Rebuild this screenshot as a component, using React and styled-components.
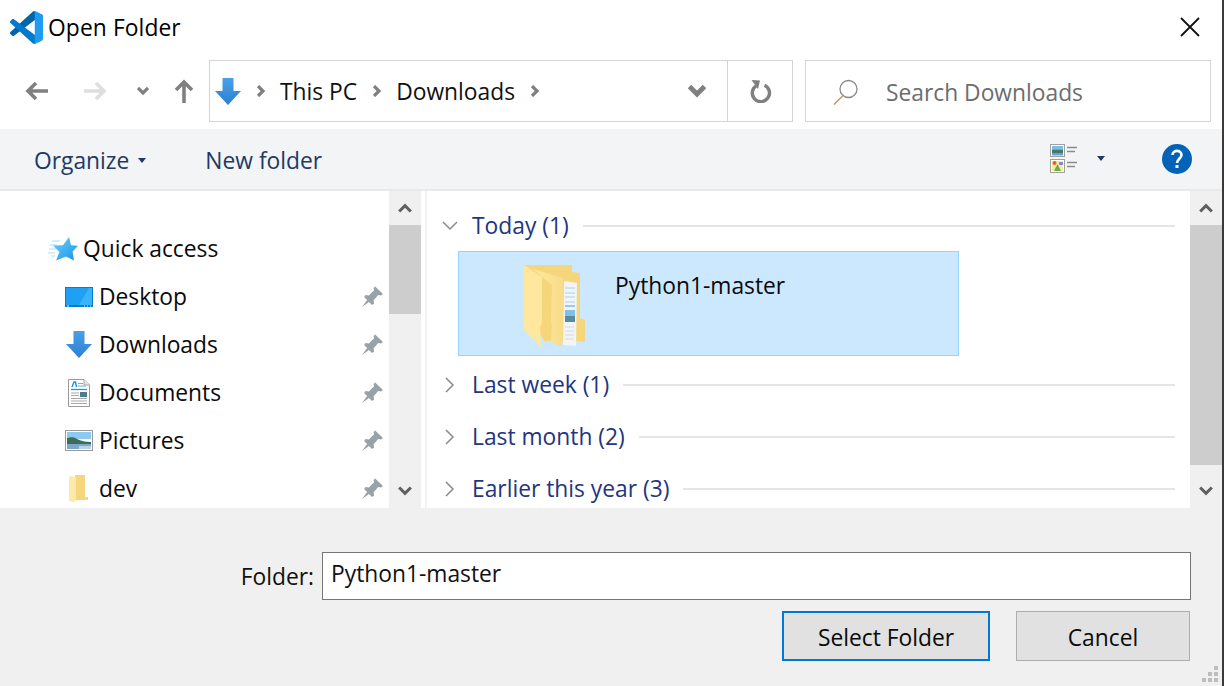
import React from 'react';
import styled, { createGlobalStyle } from 'styled-components';

const GlobalStyle = createGlobalStyle`
  html, body {
    margin: 0;
    background: #ffffff;
  }
  * {
    box-sizing: border-box;
  }
`;

const FONT = `"Open Sans", "Noto Sans", sans-serif`;

const Dialog = styled.div`
  width: 1224px;
  height: 686px;
  display: flex;
  flex-direction: column;
  overflow: hidden;
  border-right: 2px solid #3a3a3a;
  font-family: ${FONT};
  font-size: 22.8px;
  color: #000;
  background: #fff;
`;

const TitleBar = styled.div`
  height: 54px;
  display: flex;
  align-items: center;
  padding: 0 22px 0 10px;
  flex-shrink: 0;
`;

const TitleText = styled.div`
  margin-left: 5px;
  flex: 1;
  letter-spacing: 0.1px;
`;

const NavRow = styled.div`
  height: 75px;
  display: flex;
  align-items: flex-start;
  padding: 6px 11px 0 8px;
  flex-shrink: 0;
`;

const NavCell = styled.div`
  width: ${(p) => p.$w}px;
  height: 62px;
  display: flex;
  align-items: center;
  justify-content: center;
`;

const AddressBox = styled.div`
  width: 584px;
  height: 62px;
  margin-left: 3px;
  border: 1px solid #d4d4d4;
  display: flex;
  align-items: center;
  padding-left: 5px;
`;

const Crumb = styled.span`
  color: #111;
`;

const CrumbSep = styled.span`
  display: flex;
  margin: 0 13px 0 14px;
`;

const Grow = styled.div`
  flex: 1;
`;

const AddressEnd = styled.div`
  width: 65px;
  height: 100%;
  margin-left: 21px;
  border-left: 1px solid #d4d4d4;
  display: flex;
  align-items: center;
  justify-content: center;
  padding-left: 2px;
`;

const SearchBox = styled.div`
  width: 406px;
  height: 62px;
  margin-left: 12px;
  border: 1px solid #d4d4d4;
  display: flex;
  align-items: center;
  padding: 2px 0 0 27px;
  color: #6d6d6d;
  gap: 27px;
`;

const Toolbar = styled.div`
  height: 62px;
  flex-shrink: 0;
  background: #f3f4f6;
  border-bottom: 2px solid #e9e9e9;
  display: flex;
  align-items: center;
  padding: 2px 30px 0 34px;
  color: #1e3a66;
`;

const ToolButton = styled.div`
  display: flex;
  align-items: center;
  gap: 9px;
  margin-right: 59px;
`;

const HelpSlot = styled.div`
  display: flex;
  margin: -3px 0 0 38px;
`;

const ViewSlot = styled.div`
  display: flex;
  margin-top: -3px;
`;

const CaretSlot = styled.div`
  width: 46px;
  display: flex;
  justify-content: center;
  margin-top: -3px;
`;

const Main = styled.div`
  height: 317px;
  flex-shrink: 0;
  display: flex;
  overflow: hidden;
`;

const Sidebar = styled.div`
  width: 389px;
  padding-top: 34px;
  overflow: hidden;
  flex-shrink: 0;
`;

const NavItem = styled.div`
  height: 48px;
  display: flex;
  align-items: center;
  padding: 0 6px 1px ${(p) => (p.$top ? 48 : 62)}px;
  color: #0a0a0a;
`;

const ItemIcon = styled.div`
  width: ${(p) => (p.$top ? 30 : 33)}px;
  margin-right: ${(p) => (p.$top ? 5 : 4)}px;
  display: flex;
  align-items: center;
  justify-content: center;
  flex-shrink: 0;
`;

const Scrollbar = styled.div`
  width: 32px;
  flex-shrink: 0;
  background: #f0f0f0;
  display: flex;
  flex-direction: column;
`;

const ScrollArrow = styled.div`
  height: 34px;
  display: flex;
  align-items: center;
  justify-content: center;
`;

const ScrollThumb = styled.div`
  height: ${(p) => p.$h}px;
  background: #cdcdcd;
`;

const Content = styled.div`
  flex: 1;
  margin-left: 4px;
  border-left: 2px solid #f2f2f2;
  padding: 11px 15px 0 0;
  overflow: hidden;
`;

const GroupHeader = styled.div`
  height: ${(p) => p.$h}px;
  display: flex;
  align-items: center;
  padding-left: 15px;
  color: #23357f;
`;

const GroupLabel = styled.span`
  margin: -2px 14px 0 14px;
  white-space: nowrap;
`;

const GroupLine = styled.div`
  flex: 1;
  height: 2px;
  background: #e5e5e5;
`;

const FolderTile = styled.div`
  width: 501px;
  height: 105px;
  margin: 1px 0 3px 31px;
  background: #cce8ff;
  border: 1px solid #99d1ff;
  display: flex;
  align-items: flex-start;
  padding: 13px 0 0 65px;
  color: #0a0a0a;
`;

const TileName = styled.div`
  margin: 5px 0 0 29px;
`;

const Footer = styled.div`
  flex: 1;
  background: #f0f0f0;
  position: relative;
  padding: 44px 31px 0 0;
`;

const FieldRow = styled.div`
  display: flex;
  align-items: center;
  justify-content: flex-end;
`;

const FieldLabel = styled.label`
  margin-right: 8px;
  color: #111;
`;

const FieldInput = styled.div`
  width: 869px;
  height: 48px;
  background: #fff;
  border: 1px solid #767676;
  display: flex;
  align-items: center;
  padding: 0 0 6px 8px;
  color: #111;
`;

const ButtonRow = styled.div`
  display: flex;
  justify-content: flex-end;
  gap: 26px;
  margin-top: 11px;
  padding-right: 1px;
`;

const DialogButton = styled.button`
  width: ${(p) => p.$w}px;
  height: 50px;
  background: #e1e1e1;
  border: ${(p) => (p.$primary ? '2px solid #0078d7' : '1px solid #adadad')};
  font: inherit;
  color: #0a0a0a;
  padding: 2px 0 0;
`;

const Grip = styled.svg`
  position: absolute;
  right: 4px;
  bottom: 4px;
`;

const VsCodeLogo = () => (
  <svg width="33" height="33" viewBox="0 0 100 100">
    <path fill="#0065A9" d="M96.4614 10.7962L75.8569 0.875542C73.4719 -0.272773 70.6217 0.211611 68.75 2.08333L1.29858 63.5832C-0.515693 65.2373 -0.513607 68.0937 1.30308 69.7452L6.81272 74.754C8.29793 76.1042 10.5347 76.2036 12.1338 74.9905L93.3609 13.3699C96.086 11.3026 100 13.2462 100 16.6667V16.4275C100 14.0265 98.6246 11.8378 96.4614 10.7962Z" />
    <path fill="#007ACC" d="M96.4614 89.2038L75.8569 99.1245C73.4719 100.273 70.6217 99.7884 68.75 97.9167L1.29858 36.4169C-0.515693 34.7627 -0.513607 31.9063 1.30308 30.2548L6.81272 25.246C8.29793 23.8958 10.5347 23.7964 12.1338 25.0095L93.3609 86.6301C96.086 88.6974 100 86.7538 100 83.3334V83.5726C100 85.9735 98.6246 88.1622 96.4614 89.2038Z" />
    <path fill="#1F9CF0" d="M75.8578 99.1263C73.4721 100.274 70.6219 99.7885 68.75 97.9166C71.0564 100.223 75 98.5895 75 95.3278V4.67213C75 1.41039 71.0564 -0.223106 68.75 2.08329C70.6219 0.211402 73.4721 -0.273666 75.8578 0.873633L96.4587 10.7807C98.6234 11.8217 100 14.0112 100 16.4132V83.5871C100 85.9891 98.6234 88.1786 96.4586 89.2196L75.8578 99.1263Z" />
  </svg>
);

const CloseIcon = () => (
  <svg width="20" height="20" viewBox="0 0 20 20">
    <path d="M1 1L19 19M19 1L1 19" stroke="#111" strokeWidth="1.8" fill="none" />
  </svg>
);

const ArrowLeft = ({ color = '#808080' }) => (
  <svg width="24" height="20" viewBox="0 0 24 20">
    <path d="M23 10H4M11 2L3 10L11 18" stroke={color} strokeWidth="3.6" fill="none" />
  </svg>
);

const ArrowRight = ({ color = '#dedede' }) => (
  <svg width="24" height="20" viewBox="0 0 24 20">
    <path d="M1 10H20M13 2L21 10L13 18" stroke={color} strokeWidth="3.6" fill="none" />
  </svg>
);

const ArrowUp = () => (
  <svg width="20" height="24" viewBox="0 0 20 24">
    <path d="M10 24V4M2 11L10 3L18 11" stroke="#808080" strokeWidth="3.6" fill="none" />
  </svg>
);

const Chevron = ({ dir = 'down', size = 12, color = '#808080', weight = 3.2 }) => {
  const paths = {
    down: 'M1 3L6 8L11 3',
    up: 'M1 9L6 4L11 9',
    right: 'M3 1L8 6L3 11',
  };
  return (
    <svg width={size} height={size} viewBox="0 0 12 12">
      <path d={paths[dir]} stroke={color} strokeWidth={weight} fill="none" />
    </svg>
  );
};

const ThinChevron = ({ dir }) => (
  <svg width="16" height="16" viewBox="0 0 16 16">
    <path d={dir === 'down' ? 'M1 4L8 11L15 4' : 'M4 1L11 8L4 15'} stroke="#8a8a8a" strokeWidth="1.5" fill="none" />
  </svg>
);

const Caret = ({ color = '#1e3a66' }) => (
  <svg width="8" height="5" viewBox="0 0 8 5">
    <path d="M0 0H8L4 5Z" fill={color} />
  </svg>
);

const DownloadArrow = ({ width = 26, height = 27 }) => (
  <svg width={width} height={height} viewBox="0 0 26 27">
    <defs>
      <linearGradient id="dlg" x1="0" y1="0" x2="0" y2="1">
        <stop offset="0" stopColor="#4a9fe8" />
        <stop offset="1" stopColor="#2c80d3" />
      </linearGradient>
    </defs>
    <path d="M7.5 0H18.5V13H26L13 27L0 13H7.5Z" fill="url(#dlg)" />
  </svg>
);

const RefreshIcon = () => (
  <svg width="22" height="24" viewBox="0 0 22 24">
    <path d="M14.5 6.2A8.6 8.6 0 1 1 6.5 6.6" stroke="#808080" strokeWidth="3.4" fill="none" />
    <path d="M1.5 1L10 1.5L8 10Z" fill="#808080" />
  </svg>
);

const SearchIcon = () => (
  <svg width="26" height="26" viewBox="0 0 26 26">
    <circle cx="15.5" cy="10" r="8.5" stroke="#8a8a8a" strokeWidth="1.3" fill="none" />
    <path d="M10 16.5L1 25.5" stroke="#c29a6a" strokeWidth="1.6" />
  </svg>
);

const StarIcon = () => (
  <svg width="30" height="24" viewBox="0 0 30 24">
    <defs>
      <linearGradient id="starg" x1="0" y1="0" x2="1" y2="1">
        <stop offset="0" stopColor="#6fd0ff" />
        <stop offset="1" stopColor="#1793e6" />
      </linearGradient>
    </defs>
    <path d="M4 4H12M2 8H9M1 12H8M0 16H7M3 19H7" stroke="#a6e0ff" strokeWidth="1.2" />
    <path d="M21 0L23 8.2L30 8.8L24.6 14.5L26 23.5L18 19.5L8 23.5L11.5 15L5 8.5L15 8.2Z" fill="url(#starg)" />
  </svg>
);

const DesktopIcon = () => (
  <svg width="28" height="20" viewBox="0 0 28 20">
    <rect x="0" y="0" width="28" height="20" fill="#0a7ccb" />
    <rect x="1" y="1" width="26" height="17" fill="#1ea0f5" />
    <path d="M14 18L24 1H27V18Z" fill="#39b3fb" />
    <path d="M2 19H4M19 19H20M22 19H23M25 19H26" stroke="#d8f0ff" strokeWidth="1" />
  </svg>
);

const DocumentIcon = () => (
  <svg width="22" height="28" viewBox="0 0 22 28">
    <path d="M.5.5H16L21.5 6V27.5H.5Z" fill="#fff" stroke="#9a9a9a" />
    <path d="M16 .5V6H21.5" fill="#e6e6e6" stroke="#a8a8a8" />
    <path d="M4 8L6 3H7.5L8.5 8" stroke="#1d8fe0" strokeWidth="1.4" fill="none" />
    <path d="M10 4.5H15M10 7H18" stroke="#5db4ea" strokeWidth="1" />
    <path d="M3 10.5H19" stroke="#1d8fe0" strokeWidth="1.2" />
    <path d="M3 14H11M3 16.5H11M3 19.5H19M3 22H19M3 24.5H19" stroke="#a9a9a9" strokeWidth="1" />
    <rect x="12" y="13" width="7" height="5" fill="#4c7d8f" />
  </svg>
);

const PicturesIcon = () => (
  <svg width="28" height="21" viewBox="0 0 28 21">
    <rect x=".5" y=".5" width="27" height="20" fill="#fff" stroke="#9a9a9a" />
    <rect x="2" y="2" width="24" height="7" fill="#8ccaf2" />
    <path d="M2 8C7 7 9 7 12 9C16 11 20 12 26 12V14H2Z" fill="#3d6e55" />
    <rect x="2" y="14" width="24" height="5" fill="#7aa9cf" />
    <path d="M14 16H26V19H14Z" fill="#b9d4e6" />
  </svg>
);

const SmallFolder = () => (
  <svg width="19" height="28" viewBox="0 0 19 28">
    <path d="M6 0H16V22H19V25H7Z" fill="#f5d67f" />
    <path d="M0 1L7 2V25L9 25L4 27L0 26Z" fill="#fde9a8" />
  </svg>
);

const PinIcon = () => (
  <svg width="21" height="21" viewBox="0 0 20 20">
    <path d="M12.5 0.5L20 7.5L18 9L15.5 8.5L11 13.5L11.5 17L9.5 18L2 10.5L3.5 8.5L6.5 9L11.5 4L11 2Z" fill="#98a2a9" />
    <path d="M5 13L0 20L7 15Z" fill="#98a2a9" />
  </svg>
);

const BigFolder = () => (
  <svg width="62" height="83" viewBox="0 0 62 83">
    <defs>
      <linearGradient id="leaf" x1="0" y1="0" x2="1" y2="0">
        <stop offset="0" stopColor="#ffe99f" />
        <stop offset="1" stopColor="#f8dc8a" />
      </linearGradient>
    </defs>
    <path d="M0 0H48V7L56 8V53L61 55V77L52 76H20L0 40Z" fill="#f6d67a" />
    <path d="M40 16L53 18L52 81L39 80Z" fill="#f3f4f7" />
    <path d="M41 23H51M41 28H51M41 32H51M41 37H51" stroke="#9ccfee" strokeWidth="0.9" />
    <path d="M41 41H51" stroke="#5aaee6" strokeWidth="1.2" />
    <rect x="41" y="45" width="10" height="6" fill="#7fc0ea" />
    <rect x="41" y="51" width="10" height="6" fill="#5b8a9e" />
    <path d="M41 62H50M41 66H50M41 70H50M41 74H50" stroke="#d6d6d6" strokeWidth="0.9" />
    <path d="M9 4L39 13V58L38 82L27 77L28 60L27 57L28 20Z" fill="url(#leaf)" />
    <path d="M0 0L18 12V58L16 62L17 82L0 65Z" fill="#ffe89e" />
  </svg>
);

const ViewIcon = () => (
  <svg width="28" height="29" viewBox="0 0 28 29">
    <rect x=".5" y=".5" width="14" height="12" fill="#fff" stroke="#a0a0a0" />
    <rect x="2" y="2" width="11" height="3.5" fill="#7dbbe8" />
    <rect x="2" y="5.5" width="11" height="3.5" fill="#3f7a66" />
    <rect x="2" y="9" width="11" height="2.5" fill="#6aa0cf" />
    <rect x=".5" y="15.5" width="14" height="13" fill="#fff" stroke="#a0a0a0" />
    <rect x="2" y="17" width="11" height="10" fill="#f0eea0" />
    <path d="M4 27L7.5 20L11 27Z" fill="#6ea84f" />
    <circle cx="4.5" cy="19" r="2" fill="#e0642a" />
    <rect x="9" y="18" width="4" height="3" fill="#8a82d8" />
    <path d="M17 3.5H27M17 7.5H25M17 18.5H27M17 22.5H25" stroke="#8a8a8a" strokeWidth="1.4" />
  </svg>
);

const HelpIcon = () => (
  <svg width="30" height="30" viewBox="0 0 30 30">
    <circle cx="15" cy="15" r="15" fill="#0063b8" />
    <path d="M10.5 11C10.5 5.5 19.5 5.5 19.5 11C19.5 14.5 15 15 15 19" stroke="#fff" strokeWidth="2.6" fill="none" />
    <rect x="13.5" y="21" width="3" height="3" fill="#fff" />
  </svg>
);

const GripIcon = () => (
  <Grip width="16" height="16" viewBox="0 0 16 16">
    <path d="M12 0h4v4h-4zM6 6h4v4H6zM12 6h4v4h-4zM0 12h4v4H0zM6 12h4v4H6zM12 12h4v4h-4z" fill="#bdbdbd" />
  </Grip>
);

const quickAccess = [
  { name: 'Desktop', Icon: DesktopIcon },
  { name: 'Downloads', Icon: DownloadArrow },
  { name: 'Documents', Icon: DocumentIcon },
  { name: 'Pictures', Icon: PicturesIcon },
  { name: 'dev', Icon: SmallFolder },
];

const groups = [
  { name: 'Last week (1)' },
  { name: 'Last month (2)' },
  { name: 'Earlier this year (3)' },
];

function VScroll({ thumb }) {
  return (
    <Scrollbar>
      <ScrollArrow>
        <Chevron dir="up" size={14} color="#606060" weight={2.6} />
      </ScrollArrow>
      <ScrollThumb $h={thumb} />
      <Grow />
      <ScrollArrow>
        <Chevron dir="down" size={14} color="#606060" weight={2.6} />
      </ScrollArrow>
    </Scrollbar>
  );
}

export default function App() {
  return (
    <Dialog>
      <GlobalStyle />
      <TitleBar>
        <VsCodeLogo />
        <TitleText>Open Folder</TitleText>
        <CloseIcon />
      </TitleBar>

      <NavRow>
        <NavCell $w={58}><ArrowLeft /></NavCell>
        <NavCell $w={58}><ArrowRight /></NavCell>
        <NavCell $w={38}><Chevron dir="down" /></NavCell>
        <NavCell $w={44}><ArrowUp /></NavCell>
        <AddressBox>
          <DownloadArrow />
          <CrumbSep><Chevron dir="right" /></CrumbSep>
          <Crumb>This PC</Crumb>
          <CrumbSep><Chevron dir="right" /></CrumbSep>
          <Crumb>Downloads</Crumb>
          <CrumbSep><Chevron dir="right" /></CrumbSep>
          <Grow />
          <Chevron dir="down" size={18} />
          <AddressEnd>
            <RefreshIcon />
          </AddressEnd>
        </AddressBox>
        <SearchBox>
          <SearchIcon />
          Search Downloads
        </SearchBox>
      </NavRow>

      <Toolbar>
        <ToolButton>Organize <Caret /></ToolButton>
        <ToolButton>New folder</ToolButton>
        <Grow />
        <ViewSlot><ViewIcon /></ViewSlot>
        <CaretSlot><Caret /></CaretSlot>
        <HelpSlot><HelpIcon /></HelpSlot>
      </Toolbar>

      <Main>
        <Sidebar>
          <NavItem $top>
            <ItemIcon $top><StarIcon /></ItemIcon>
            Quick access
          </NavItem>
          {quickAccess.map(({ name, Icon }) => (
            <NavItem key={name}>
              <ItemIcon><Icon /></ItemIcon>
              {name}
              <Grow />
              <PinIcon />
            </NavItem>
          ))}
        </Sidebar>
        <VScroll thumb={89} />
        <Content>
          <GroupHeader $h={48}>
            <ThinChevron dir="down" />
            <GroupLabel>Today (1)</GroupLabel>
            <GroupLine />
          </GroupHeader>
          <FolderTile>
            <BigFolder />
            <TileName>Python1-master</TileName>
          </FolderTile>
          {groups.map((g) => (
            <GroupHeader key={g.name} $h={52}>
              <ThinChevron dir="right" />
              <GroupLabel>{g.name}</GroupLabel>
              <GroupLine />
            </GroupHeader>
          ))}
        </Content>
        <VScroll thumb={240} />
      </Main>

      <Footer>
        <FieldRow>
          <FieldLabel>Folder:</FieldLabel>
          <FieldInput>Python1-master</FieldInput>
        </FieldRow>
        <ButtonRow>
          <DialogButton $w={208} $primary>Select Folder</DialogButton>
          <DialogButton $w={174}>Cancel</DialogButton>
        </ButtonRow>
        <GripIcon />
      </Footer>
    </Dialog>
  );
}
